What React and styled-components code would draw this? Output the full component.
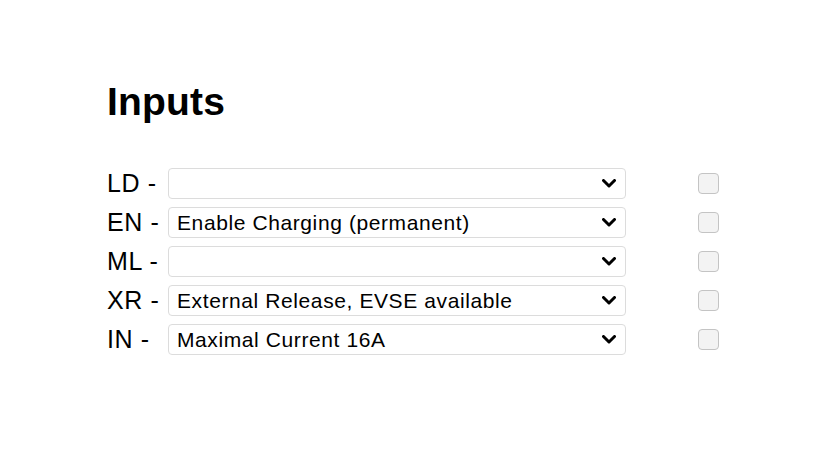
import React from 'react';
import styled, { createGlobalStyle } from 'styled-components';

const GlobalStyle = createGlobalStyle`
  body {
    margin: 0;
    background: #fff;
    font-family: 'Liberation Sans', Arial, sans-serif;
    color: #000;
  }
`;

const Page = styled.main`
  padding: 79px 0 0 107px;
`;

const Title = styled.h1`
  margin: 0 0 43px;
  font-size: 39px;
  font-weight: bold;
  line-height: 46px;
  letter-spacing: 0.2px;
`;

const List = styled.div`
  display: flex;
  flex-direction: column;
  gap: 8px;
`;

const Row = styled.div`
  display: flex;
  align-items: center;
  height: 31px;
`;

const Label = styled.span`
  width: 61px;
  font-size: 25px;
  line-height: 31px;
  letter-spacing: 0.6px;
`;

const SelectWrap = styled.div`
  position: relative;
  width: 458px;
  height: 31px;
`;

const Select = styled.select`
  appearance: none;
  width: 100%;
  height: 100%;
  box-sizing: border-box;
  border: 1px solid #dcdcdc;
  border-radius: 4px;
  background: #fff;
  padding: 0 30px 0 8px;
  font-family: 'Liberation Sans', Arial, sans-serif;
  font-size: 21px;
  letter-spacing: 0.6px;
  color: #000;
  outline: none;
`;

const Chevron = styled.svg`
  position: absolute;
  right: 10px;
  top: 11px;
  width: 14px;
  height: 9px;
  pointer-events: none;
`;

const Check = styled.input`
  appearance: none;
  margin: 0 0 0 72px;
  width: 21px;
  height: 21px;
  box-sizing: border-box;
  border: 1px solid #c4c4c4;
  border-radius: 4px;
  background: #f3f3f3;
`;

const inputs = [
  { id: 'LD', value: '' },
  { id: 'EN', value: 'Enable Charging (permanent)' },
  { id: 'ML', value: '' },
  { id: 'XR', value: 'External Release, EVSE available' },
  { id: 'IN', value: 'Maximal Current 16A' },
];

const InputRow = ({ id, value }) => (
  <Row>
    <Label>{id} -</Label>
    <SelectWrap>
      <Select defaultValue={value}>
        <option value="">{''}</option>
        {value && <option value={value}>{value}</option>}
      </Select>
      <Chevron viewBox="0 0 14 9">
        <path d="M1.5 1.5 L7 7 L12.5 1.5" fill="none" stroke="#000" strokeWidth="3" strokeLinecap="round" strokeLinejoin="round" />
      </Chevron>
    </SelectWrap>
    <Check type="checkbox" />
  </Row>
);

const App = () => (
  <>
    <GlobalStyle />
    <Page>
      <Title>Inputs</Title>
      <List>
        {inputs.map(item => (
          <InputRow key={item.id} {...item} />
        ))}
      </List>
    </Page>
  </>
);

export default App;
